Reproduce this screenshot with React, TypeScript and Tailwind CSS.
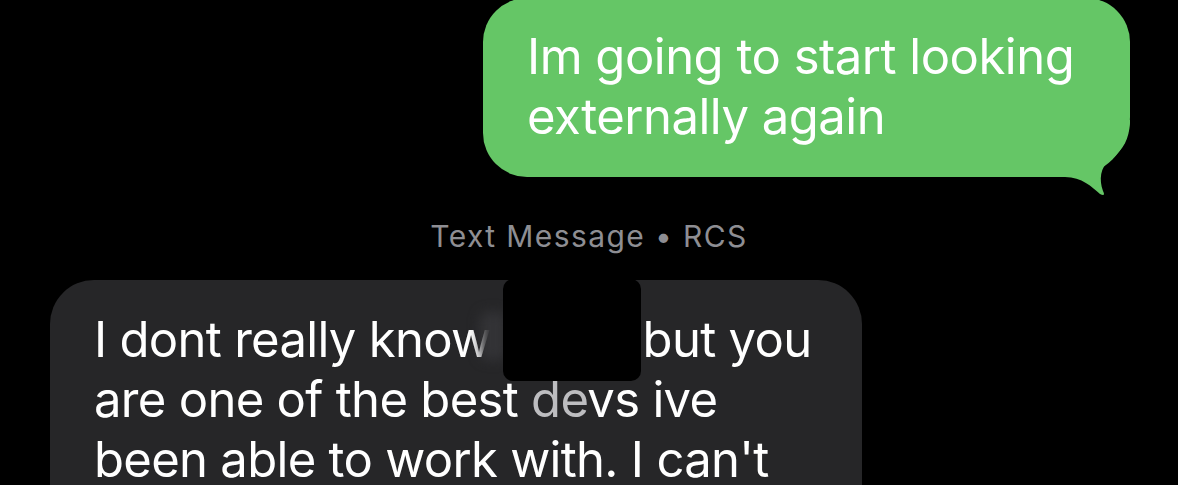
export default function App() {
  return (
    <div className="relative h-[485px] w-full overflow-hidden bg-black font-['Inter',sans-serif] antialiased">
      <div className="flex flex-col">
        {/* outgoing */}
        <div className="flex justify-end pr-[48px] -mt-[2px]">
          <div className="relative">
            <div className="w-[647px] rounded-[44px] rounded-br-[60px] bg-[#65c666] pl-[44px] pr-[20px] pt-[29px] pb-[30px] text-[49px] leading-[60px] tracking-[-0.5px] text-white">
              Im going to start looking
              <br />
              externally again
            </div>
            <svg
              className="absolute left-[557px] top-[122px]"
              width="95"
              height="80"
              viewBox="0 0 95 80"
            >
              <path
                d="M0 0 L90 0 L90 3 C89 18 84 30 70 40 C60 47 59 60 63 71 Q66 77 60 74 C52 67 42 57 25 57 L0 57 Z"
                fill="#65c666"
              />
            </svg>
          </div>
        </div>

        {/* meta */}
        <div className="mt-[41px] text-center text-[30px] leading-[36px] tracking-[1.4px] text-[#8e8e93]">
          Text Message • RCS
        </div>

        {/* incoming */}
        <div className="mt-[26px] pl-[50px]">
          <div className="relative w-[812px] rounded-t-[44px] bg-[#262628] pl-[44px] pt-[30px] pb-[40px] text-[49px] leading-[60px] tracking-[-0.7px] text-white">
            I dont really know <span className="inline-block w-[126px] text-[#9a9a9a]">g</span> but you
            <br />
            are one of the best <span className="text-[#bdbdc0]">de</span>vs ive
            <br />
            been able to work with. I can't
            <div className="absolute left-[430px] top-[32px] h-[48px] w-[26px] rounded-[8px] bg-[#333336] blur-[6px]" />
            <div className="absolute left-[453px] -top-[1px] h-[102px] w-[138px] rounded-[10px] bg-black" />
          </div>
        </div>
      </div>
    </div>
  );
}
